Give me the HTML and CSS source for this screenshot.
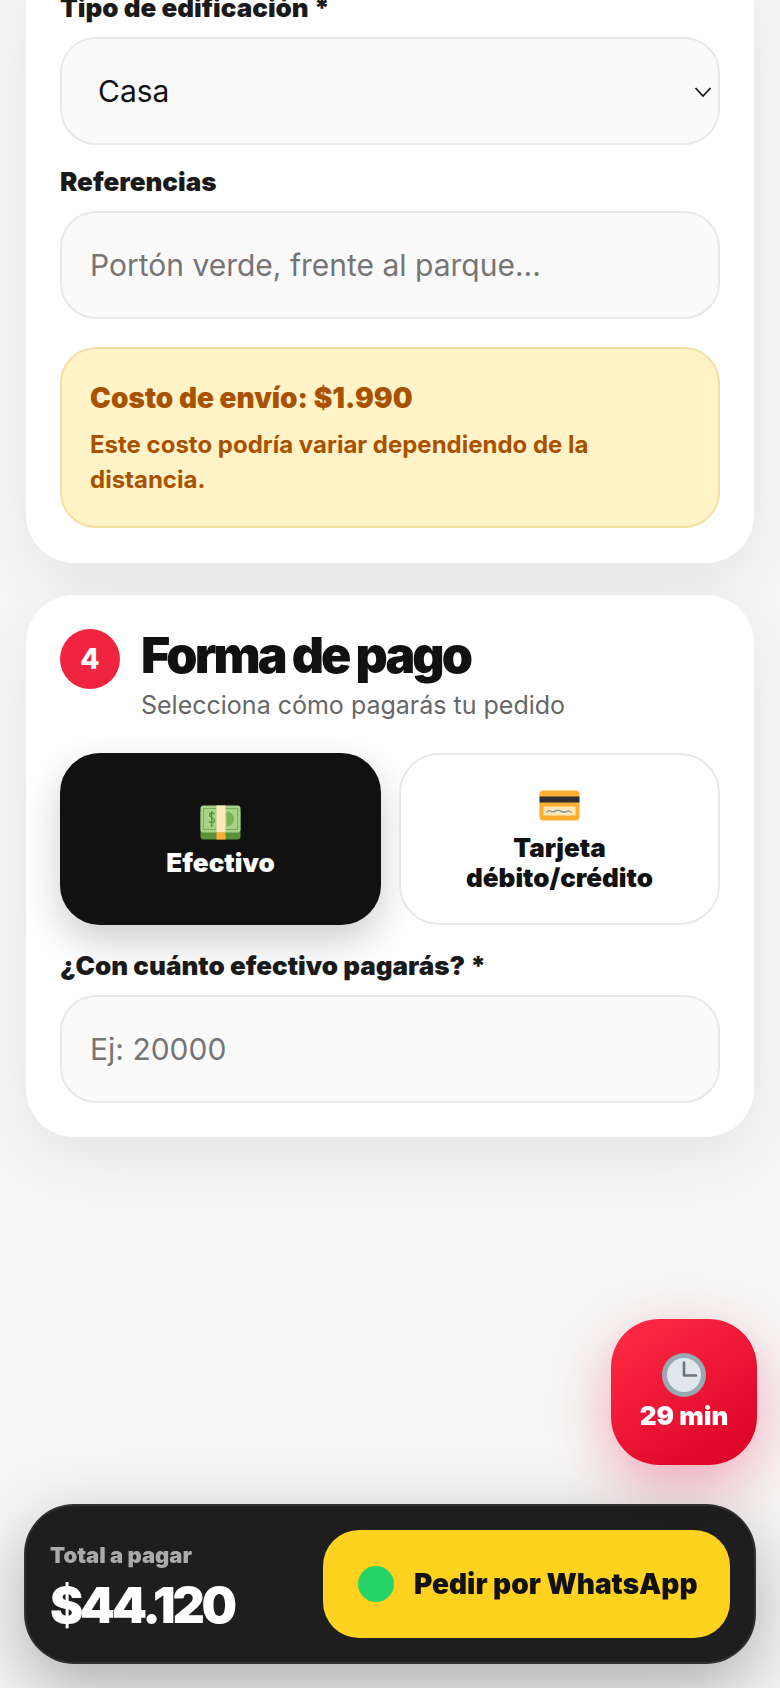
FILE: index.html
```html
<!DOCTYPE html>
<html lang="es">
<head>
    <meta charset="UTF-8">
    <title>Finalizar pedido</title>
    <link rel="stylesheet" href="styles.css">
</head>
<body>
    <main class="page">
        <!-- Direccion (cortada por el scroll) -->
        <section class="card">
            <label class="field-label" for="tipo">Tipo de edificación *</label>
            <div class="select-wrap">
                <select id="tipo" class="field">
                    <option>Casa</option>
                    <option>Departamento</option>
                </select>
                <svg class="select-arrow" viewBox="0 0 18 12" fill="none" stroke="#111" stroke-width="1.7"><path d="M1.5 2 9 10l7.5-8"/></svg>
            </div>

            <label class="field-label" for="referencias">Referencias</label>
            <input id="referencias" class="field field-text" type="text" placeholder="Portón verde, frente al parque...">

            <div class="shipping">
                <div class="shipping-title">Costo de envío: $1.990</div>
                <div class="shipping-note">Este costo podría variar dependiendo de la distancia.</div>
            </div>
        </section>

        <!-- Forma de pago -->
        <section class="card">
            <header class="step">
                <span class="step-num">4</span>
                <div>
                    <h2>Forma de pago</h2>
                    <p>Selecciona cómo pagarás tu pedido</p>
                </div>
            </header>

            <div class="pay-options">
                <button class="pay-option active" type="button">
                    <svg class="pay-icon" viewBox="0 -5.500 40 41">
                        <rect x="0" y="4" width="40" height="30" rx="3" fill="#5c913b"/>
                        <rect x="0" y="0" width="40" height="27" rx="3" fill="#a6d388"/>
                        <rect x="3" y="3" width="34" height="21" fill="none" stroke="#77b255" stroke-width="1"/>
                        <path d="M26 6a7.500 7.500 0 0 1 0 15z" fill="#77b255"/>
                        <path d="M14 8.500c-1-1.500-5-1.500-5 1 0 3 5 2.500 5 5.500 0 2.500-4 2.500-5.500 1M11.200 5.500v16" fill="none" stroke="#5c913b" stroke-width="1.300"/>
                        <rect x="16" y="0" width="9" height="27" fill="#ffe8b6"/>
                        <rect x="16" y="27" width="9" height="7" fill="#ffac33"/>
                    </svg>
                    <span>Efectivo</span>
                </button>
                <button class="pay-option" type="button">
                    <svg class="pay-icon" viewBox="0 -5.500 40 41">
                        <rect x="0" y="0" width="40" height="30" rx="4" fill="#ffac33"/>
                        <rect x="0" y="6" width="40" height="6" fill="#292f33"/>
                        <rect x="4" y="16" width="32" height="9" fill="#ffe8b6"/>
                        <path d="M7 22c2-3 3-2 5-1s3 0 5-1 3 0 5 1 3 1 5 0 3-1 5 1" fill="none" stroke="#8899a6" stroke-width="1.500"/>
                    </svg>
                    <span>Tarjeta<br>débito/crédito</span>
                </button>
            </div>

            <label class="field-label" for="efectivo">¿Con cuánto efectivo pagarás? *</label>
            <input id="efectivo" class="field field-text field-last" type="text" placeholder="Ej: 20000">
        </section>
    </main>

    <!-- Tiempo estimado -->
    <div class="eta">
        <svg class="eta-icon" viewBox="0 0 44 44">
            <circle cx="22" cy="22" r="22" fill="#99aab5"/>
            <circle cx="22" cy="22" r="17" fill="#e1e8ed"/>
            <path d="M22 9.500V22.500H34" fill="none" stroke="#66757f" stroke-width="2.600" stroke-linecap="round" stroke-linejoin="round"/>
        </svg>
        <span>29 min</span>
    </div>

    <!-- Barra inferior -->
    <div class="checkout">
        <div class="total">
            <div class="total-label">Total a pagar</div>
            <div class="total-value">$44.120</div>
        </div>
        <button class="whatsapp" type="button">
            <span class="whatsapp-dot"></span>
            <span class="whatsapp-text">Pedir por WhatsApp</span>
        </button>
    </div>
</body>
</html>
```

FILE: styles.css
```css
* {
    box-sizing: border-box;
}

html, body {
    height: 1688px;
    overflow: hidden;
}

body {
    font-family: 'Inter', 'Liberation Sans', sans-serif;
    background-color: #f6f6f6;
    color: #111;
    margin: 0;
    padding: 0;
}

.page {
    display: flex;
    flex-direction: column;
    gap: 32px;
    padding: 0 26px;
    margin-top: -41px;
}

.card {
    background-color: #ffffff;
    padding: 34px;
    border-radius: 48px;
    box-shadow: 0 20px 60px rgba(0, 0, 0, 0.07);
}

.field-label {
    display: block;
    font-size: 26px;
    line-height: 30px;
    font-weight: 900;
    color: #1a1a1a;
    margin-bottom: 14px;
}

.field {
    display: block;
    width: 100%;
    height: 108px;
    padding: 0 28px;
    background-color: #fafafa;
    border: 2px solid #e8e8e8;
    border-radius: 36px;
    font-family: inherit;
    font-size: 30px;
    color: #111;
    outline: none;
}

.field-text {
    margin-bottom: 28px;
}

.field-last {
    margin-bottom: 0;
}

.field::placeholder {
    color: #757575;
}

.select-wrap {
    position: relative;
    margin-bottom: 22px;
}

.select-wrap select {
    appearance: none;
    padding-left: 36px;
}

.select-arrow {
    position: absolute;
    right: 8px;
    top: 49px;
    width: 18px;
    height: 12px;
}

.shipping {
    background-color: #fff3c7;
    border: 2px solid #f3dfa2;
    border-radius: 36px;
    padding: 31px 28px 29px;
    margin-bottom: 1px;
    color: #a85200;
}

.shipping-title {
    font-size: 28px;
    line-height: 36px;
    font-weight: 900;
    margin-bottom: 11px;
}

.shipping-note {
    font-size: 24px;
    line-height: 35px;
    font-weight: 700;
}

.step {
    display: flex;
    align-items: flex-start;
    gap: 21px;
    margin-bottom: 32px;
}

.step-num {
    flex: none;
    display: flex;
    align-items: center;
    justify-content: center;
    width: 60px;
    height: 60px;
    border-radius: 50%;
    background-color: #f0243f;
    color: #fff;
    font-size: 28px;
    font-weight: 800;
}

.step h2 {
    margin: 0;
    font-size: 50px;
    line-height: 52px;
    font-weight: 900;
    letter-spacing: -2.900px;
    color: #111;
}

.step p {
    margin: 8px 0 0;
    font-size: 25px;
    line-height: 32px;
    color: #666;
}

.pay-options {
    display: grid;
    grid-template-columns: 1fr 1fr;
    gap: 18px;
    margin-bottom: 26px;
}

.pay-option {
    display: flex;
    flex-direction: column;
    align-items: center;
    justify-content: center;
    gap: 7px;
    height: 172px;
    padding: 0 16px;
    background-color: #fff;
    border: 2px solid #e8e8e8;
    border-radius: 40px;
    font-family: inherit;
    font-size: 26px;
    line-height: 30px;
    font-weight: 900;
    color: #111;
}

.pay-option.active {
    background-color: #111;
    border-color: #111;
    color: #fff;
    box-shadow: 0 16px 40px rgba(0, 0, 0, 0.2);
}

.pay-icon {
    width: 41px;
    height: 41px;
    display: block;
}

.eta {
    position: fixed;
    right: 23px;
    top: 1319px;
    width: 146px;
    height: 146px;
    display: flex;
    flex-direction: column;
    align-items: center;
    justify-content: center;
    gap: 3px;
    border-radius: 48px;
    background: linear-gradient(145deg, #ff2d46, #d90025);
    box-shadow: 0 20px 60px rgba(230, 0, 40, 0.32);
    color: #fff;
    font-size: 26px;
    line-height: 32px;
    font-weight: 900;
}

.eta-icon {
    width: 44px;
    height: 44px;
}

.checkout {
    position: fixed;
    left: 24px;
    right: 24px;
    top: 1504px;
    height: 160px;
    display: flex;
    align-items: center;
    justify-content: space-between;
    padding: 0 24px;
    background-color: rgba(16, 16, 16, 0.94);
    border: 2px solid rgba(60, 60, 60, 0.6);
    border-radius: 50px;
    box-shadow: 0 24px 70px rgba(0, 0, 0, 0.3);
}

.total {
    padding-top: 5px;
}

.total-label {
    font-size: 22px;
    line-height: 28px;
    font-weight: 900;
    color: #aaa;
}

.total-value {
    font-size: 50px;
    line-height: 56px;
    font-weight: 900;
    letter-spacing: -3.200px;
    color: #fff;
    margin-top: 8px;
}

.whatsapp {
    display: flex;
    align-items: center;
    gap: 20px;
    width: 407px;
    height: 108px;
    padding: 0 20px 0 35px;
    background-color: #ffd21f;
    border: none;
    border-radius: 36px;
    font-family: inherit;
    font-size: 28px;
    font-weight: 900;
    color: #111;
}

.whatsapp-text {
    white-space: nowrap;
}

.whatsapp-dot {
    flex: none;
    width: 36px;
    height: 36px;
    border-radius: 50%;
    background-color: #25d366;
}
```
